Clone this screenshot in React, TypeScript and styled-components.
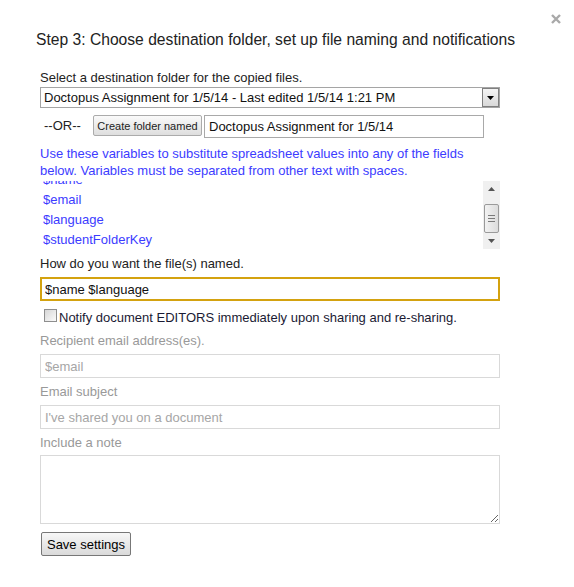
import { useEffect, useRef } from 'react'
import styled, { createGlobalStyle } from 'styled-components'

const variables = ['$name', '$email', '$language', '$studentFolderKey']

const App = () => {
  const listRef = useRef<HTMLDivElement>(null)

  useEffect(() => {
    // the variable list sits a little scrolled in the original dialog
    if (listRef.current) listRef.current.scrollTop = 11
  }, [])

  return (
    <Dialog>
      <GlobalStyle />
      <CloseRow>
        <CloseButton aria-label="Close">
          <svg width="10" height="10" viewBox="0 0 10 10">
            <path d="M1 1 L9 9 M9 1 L1 9" stroke="#a9a9a9" strokeWidth="2.4" />
          </svg>
        </CloseButton>
      </CloseRow>
      <Title>Step 3: Choose destination folder, set up file naming and notifications</Title>

      <Form>
        <FieldLabel>Select a destination folder for the copied files.</FieldLabel>
        <SelectBox>
          <SelectText>Doctopus Assignment for 1/5/14 - Last edited 1/5/14 1:21 PM</SelectText>
          <DropButton>
            <svg width="7" height="4" viewBox="0 0 7 4">
              <path d="M0 0 H7 L3.5 4 Z" fill="#000" />
            </svg>
          </DropButton>
        </SelectBox>

        <OrRow>
          <OrLabel>--OR--</OrLabel>
          <SmallButton>Create folder named</SmallButton>
          <FolderInput defaultValue="Doctopus Assignment for 1/5/14" />
        </OrRow>

        <Hint>
          Use these variables to substitute spreadsheet values into any of the fields below. Variables must be
          separated from other text with spaces.
        </Hint>

        <ListBox>
          <VarList ref={listRef}>
            {variables.map((v) => (
              <VarItem key={v}>{v}</VarItem>
            ))}
          </VarList>
          <ScrollTrack>
            <ScrollArrow>
              <svg width="7" height="4" viewBox="0 0 7 4">
                <path d="M0 4 H7 L3.5 0 Z" fill="#555" />
              </svg>
            </ScrollArrow>
            <ThumbArea>
              <Thumb>
                <Grip />
                <Grip />
                <Grip />
              </Thumb>
            </ThumbArea>
            <ScrollArrow>
              <svg width="7" height="4" viewBox="0 0 7 4">
                <path d="M0 0 H7 L3.5 4 Z" fill="#555" />
              </svg>
            </ScrollArrow>
          </ScrollTrack>
        </ListBox>

        <FieldLabel $gap={7}>How do you want the file(s) named.</FieldLabel>
        <NameInput defaultValue="$name $language" />

        <CheckRow>
          <CheckBox />
          <CheckLabel>Notify document EDITORS immediately upon sharing and re-sharing.</CheckLabel>
        </CheckRow>

        <FieldLabel $muted $gap={7}>Recipient email address(es).</FieldLabel>
        <TextField defaultValue="$email" />

        <FieldLabel $muted $gap={6}>Email subject</FieldLabel>
        <TextField defaultValue="I've shared you on a document" />

        <FieldLabel $muted $gap={6}>Include a note</FieldLabel>
        <NoteArea />

        <SaveButton>Save settings</SaveButton>
      </Form>
    </Dialog>
  )
}

export default App

const GlobalStyle = createGlobalStyle`
  body {
    margin: 0;
    background: #fff;
    font-family: "Liberation Sans", Arial, sans-serif;
  }
`

const Dialog = styled.div`
  width: 574px;
  height: 587px;
  box-sizing: border-box;
  overflow: hidden;
`

const CloseRow = styled.div`
  display: flex;
  justify-content: flex-end;
  height: 30px;
  padding: 14px 13px 0 0;
  box-sizing: border-box;
`

const CloseButton = styled.div`
  width: 10px;
  height: 10px;
  display: flex;
  cursor: pointer;
`

const Title = styled.h1`
  margin: 0 0 0 36px;
  font-size: 15.65px;
  line-height: 20px;
  font-weight: normal;
  color: #222;
`

const Form = styled.div`
  margin: 20px 0 0 40px;
  width: 460px;
  display: flex;
  flex-direction: column;
  font-size: 13px;
`

const FieldLabel = styled.div<{ $muted?: boolean; $gap?: number }>`
  margin-top: ${(p) => p.$gap ?? 0}px;
  line-height: 16px;
  color: ${(p) => (p.$muted ? '#999' : '#222')};
`

const SelectBox = styled.div`
  margin-top: 1px;
  height: 21px;
  box-sizing: border-box;
  border: 1px solid #a5a5a5;
  display: flex;
`

const SelectText = styled.div`
  flex: 1;
  padding-left: 3px;
  line-height: 19px;
  color: #111;
  white-space: nowrap;
`

const DropButton = styled.div`
  width: 17px;
  box-sizing: border-box;
  border: 1px solid #7f7f7f;
  background: linear-gradient(#f4f4f4, #d9d9d9);
  display: flex;
  align-items: center;
  justify-content: center;
`

const OrRow = styled.div`
  margin-top: 7px;
  display: flex;
  align-items: flex-start;
`

const OrLabel = styled.div`
  width: 53px;
  padding-left: 4px;
  box-sizing: border-box;
  line-height: 21px;
  color: #222;
`

const SmallButton = styled.button`
  width: 109px;
  height: 21px;
  padding: 0;
  font-family: inherit;
  font-size: 11px;
  color: #222;
  border: 1px solid #ababab;
  border-radius: 2px;
  background: linear-gradient(#fafafa, #dedede);
`

const FolderInput = styled.input`
  margin-left: 2px;
  width: 280px;
  height: 23px;
  box-sizing: border-box;
  border: 1px solid #a9a9a9;
  padding: 0 4px;
  font-family: inherit;
  font-size: 13px;
  color: #111;
  outline: none;
`

const Hint = styled.div`
  margin-top: 7px;
  line-height: 17px;
  color: #3c3cff;
`

const ListBox = styled.div`
  margin-top: 2px;
  height: 68px;
  display: flex;
`

const VarList = styled.div`
  flex: 1;
  overflow: hidden;
`

const VarItem = styled.div`
  line-height: 20px;
  padding-left: 3px;
  color: #3c3cff;
`

const ScrollTrack = styled.div`
  width: 17px;
  background: #f0f0f0;
  display: flex;
  flex-direction: column;
`

const ScrollArrow = styled.div`
  height: 17px;
  display: flex;
  align-items: center;
  justify-content: center;
`

const ThumbArea = styled.div`
  flex: 1;
  padding: 6px 1px 0;
`

const Thumb = styled.div`
  height: 29px;
  box-sizing: border-box;
  border: 1px solid #9a9a9a;
  border-radius: 2px;
  background: linear-gradient(90deg, #f2f2f2, #dcdcdc);
  display: flex;
  flex-direction: column;
  align-items: center;
  justify-content: center;
  gap: 2px;
`

const Grip = styled.div`
  width: 7px;
  height: 1px;
  background: #7a7a7a;
`

const NameInput = styled.input`
  margin-top: 5px;
  width: 460px;
  height: 24px;
  box-sizing: border-box;
  border: 2px solid #d4a20f;
  padding: 0 3px;
  font-family: inherit;
  font-size: 13px;
  color: #111;
  outline: none;
`

const CheckRow = styled.div`
  margin-top: 8px;
  display: flex;
  align-items: flex-start;
  gap: 2px;
  padding-left: 4px;
`

const CheckBox = styled.div`
  width: 13px;
  height: 13px;
  box-sizing: border-box;
  border: 1px solid #8e8e8e;
  background: linear-gradient(135deg, #d6d6d6, #fbfbfb);
`

const CheckLabel = styled.div`
  margin-top: 1px;
  line-height: 16px;
  color: #1a1a33;
`

const TextField = styled.input`
  margin-top: 5px;
  width: 460px;
  height: 24px;
  box-sizing: border-box;
  border: 1px solid #d9d9d9;
  padding: 0 4px;
  font-family: inherit;
  font-size: 13px;
  color: #a6a6a6;
  outline: none;
`

const NoteArea = styled.textarea`
  margin-top: 4px;
  width: 460px;
  height: 69px;
  box-sizing: border-box;
  border: 1px solid #d9d9d9;
  font-family: inherit;
  font-size: 13px;
  outline: none;
  resize: vertical;
`

const SaveButton = styled.button`
  margin: 8px 0 0 1px;
  width: 90px;
  height: 24px;
  padding: 0;
  font-family: inherit;
  font-size: 13px;
  color: #000;
  border: 1px solid #777;
  border-radius: 2px;
  background: linear-gradient(#f7f7f7, #dadada);
  align-self: flex-start;
`
